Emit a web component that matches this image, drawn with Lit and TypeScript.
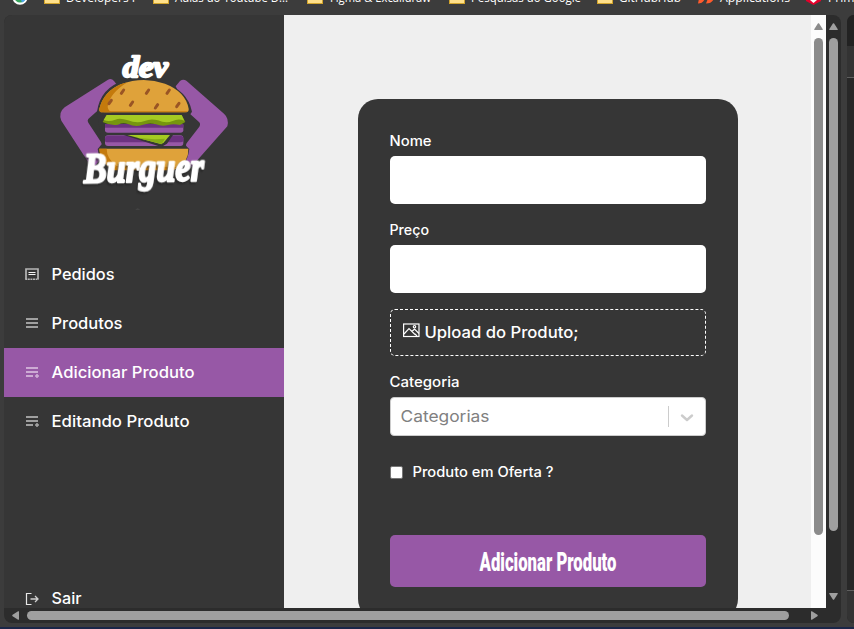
import { LitElement, html, svg, css } from "lit";
import { customElement, property } from "lit/decorators.js";

/** A single line of text fitted to a given width. */
@customElement("fit-text")
class FitText extends LitElement {
  @property() text = "";
  @property({ type: Number }) w = 100;
  @property({ type: Number }) h = 20;
  @property({ type: Number }) base = 15;
  static styles = css`
    :host { display: block; flex: none; }
    svg { display: block; overflow: visible; }
    text { fill: currentColor; font: inherit; }
  `;
  render() {
    return html`<svg width=${this.w} height=${this.h}>
      <text x="-0.5" y=${this.base} textLength=${this.w} lengthAdjust="spacingAndGlyphs">${this.text}</text>
    </svg>`;
  }
}

@customElement("bookmark-bar")
class BookmarkBar extends LitElement {
  static styles = css`
    :host { display: block; height: 15px; overflow: hidden; }
    svg { display: block; }
    text { font: 12px "Open Sans", sans-serif; fill: #fff; }
  `;
  render() {
    const folders = [44, 153, 307, 449, 597];
    const items: [string, number, number][] = [
      ["Developers I", 66, 69], ["Aulas do Youtube D...", 175, 113],
      ["Figma & Excalidraw", 330, 101], ["Pesquisas do Google", 471, 110],
      ["GitHubHub", 619, 62], ["Applications", 720, 70], ["Prime Video", 828, 68],
    ];
    return html`<svg width="854" height="15">
      <circle cx="20" cy="-3" r="7.7" fill="#fff" />
      <circle cx="20" cy="-3" r="5.6" fill="#35a45c" />
      <path d="M20-3h6a6 6 0 0 1-4 5.500Z" fill="#4aa3e8" />
      ${folders.map((x) => svg`<rect x=${x + 0.5} y="-8" width="15" height="11.500" fill="#ffe08a" stroke="#d2a42c" />`)}
      <path d="M698 3.500q5 0 7-5h-6ZM706 3.500q6 0 8-5h-6Z" fill="#ff5a2c" />
      <path d="M806-2h15v3l-7.500 4-7.500-4Z" fill="#e4002b" /><path d="M810-2h7v2l-3.500 3-3.500-3Z" fill="#fff" />
      ${items.map(([t, x, w]) => svg`<text x=${x} y="2" textLength=${w} lengthAdjust="spacingAndGlyphs">${t}</text>`)}
    </svg>`;
  }
}

@customElement("burger-logo")
class BurgerLogo extends LitElement {
  static styles = css`
    :host { display: block; }
    svg { display: block; }
    text { font-family: "Liberation Serif", serif; font-style: italic; font-weight: 700; fill: #fff; stroke: #fff; stroke-width: 6; stroke-linejoin: round; }
    .name { filter: drop-shadow(-4px 5px 2px rgba(30, 30, 30, 0.6)); }
  `;
  render() {
    const seeds = [[218, 140], [293, 140], [355, 140], [181, 171], [245, 176], [320, 184], [384, 180]];
    return html`<svg width="190" height="170" viewBox="0 0 570 510">
      <g fill="#9758a6">
        <path d="M174 104q10-5 18 4l12 16-58 70-28 25q-8 6-3 14l57 87-36 41-20-8-82-126q-10-24 10-40Z" />
        <path d="M390 108q10-8 20 0l112 98q16 14 10 38L424 366l-34-46 58-75q5-8-1-14l-30-27-40-80Z" />
      </g>
      <path d="M141 200q10-72 80-93 62-15 118 5 74 24 87 88l-8 12-10 90 10 10q-8 62-58 66H200q-50-10-57-66l12-14Z" fill="#363636" />
      <path d="M148 191q14-52 64-73 67-25 133-2 62 24 71 75 2 11-12 11H158q-12 0-10-11Z" fill="#dfa23a" />
      <path d="M148 191q14-52 64-73l20-6q-54 34-59 73 0 10 12 17h-27q-12 0-10-11Z" fill="#c47a0c" />
      <path d="M173 199h241q-3 3-10 3H160Z" fill="#c47a0c" />
      ${seeds.map(([x, y]) => svg`<path d=${`M${x - 4} ${y + 5}l7-10`} stroke="#9a5524" stroke-width="9" stroke-linecap="round" />`)}
      <path d="M165 239h235v17q0 7-9 7H174q-9 0-9-7Z" fill="#9758a6" />
      <path d="M165 237h235v11H165Z" fill="#6c3280" />
      <path d="M170 210h225l11 21-16 9q-20-4-36 0-18 5-36-2-20-6-42 2-20 7-42-3-15-5-30 2-22 4-46-8Z" fill="#76950f" />
      <path d="M170 210h225l8 17q-18-8-35 1-20 8-44-2-22-6-40 2-24 8-50-2-24-8-38-2-20 8-35 1Z" fill="#a5cb22" />
      <path d="M174 271h217q9 0 9 9v14q0 9-9 9H174q-9 0-9-9v-14q0-9 9-9Z" fill="#9758a6" />
      <path d="M174 272h217q9 0 9 9v8q-3 3-9 3H174q-9 0-9-5v-6q0-9 9-9Z" fill="#6c3280" />
      <path d="m221 270 113 36 17-10 18-26Z" fill="#363636" />
      <path d="m232 270 102 28 8-6 18-22Z" fill="#a5cb22" /><path d="m264 279 71 18 10-16-30 2Z" fill="#86ac18" />
      <path d="M148 311h267q2 38-35 61H190q-40-22-42-61Z" fill="#dfa23a" />
      <path d="M148 311h22q0 30 30 52l180 3-8 10H190q-42-26-42-65Z" fill="#c47a0c" />
      <g transform="translate(0 96) scale(1 1.13)"><text x="218" y="0" font-size="80" textLength="136" lengthAdjust="spacingAndGlyphs">dev</text></g>
      <g class="name" transform="translate(0 410) rotate(-1 280 0) scale(1 1.2)"><text x="102" y="0" font-size="105" textLength="360" lengthAdjust="spacingAndGlyphs">Burguer</text></g>
      <path d="M255 493q8-4 16 0Z" fill="#686868" />
    </svg>`;
  }
}

const bars = svg`<path d="M1 19h12v2H1ZM1 23h12v2H1Z" fill="currentColor" />`;
const icons: Record<string, unknown> = {
  receipt: svg`<path d="M1 29V19h12v10" fill="none" stroke="#b5b5b5" stroke-width="1.700" />
    <path d="M.2 29.300h13.600" stroke="#b5b5b5" stroke-width="1.500" stroke-dasharray="2 .6" />
    <path d="M3.500 22.500h7M3.500 24.500h7" stroke="#f4f4f4" />`,
  menu: svg`${bars}<path d="M1 27h12v2H1Z" fill="currentColor" />`,
  add: svg`${bars}<path d="M1 27h7v2H1Z" fill="currentColor" /><path d="M12 26l2 2-2 2-2-2Z" fill="currentColor" stroke="currentColor" stroke-width=".6" />`,
  exit: svg`<path d="M6.500 19.500h-5v11h5" fill="none" stroke="#e6e6e6" stroke-width="1.200" /><path d="M5.500 25H13M10 22l3 3-3 3" fill="none" stroke="#d0d0d0" stroke-width="1.300" />`,
};

@customElement("side-nav")
class SideNav extends LitElement {
  static styles = css`
    :host { display: flex; flex-direction: column; width: 280px; background: #363636; color: #fff; overflow: hidden; font: 500 16px Inter, sans-serif; }
    burger-logo { padding: 30px 0 35px 46px; }
    .row { display: flex; flex: none; height: 49px; gap: 13px; padding-left: 21px; }
    .row svg { width: 14px; height: 49px; color: #a0a0a0; }
    .active { background: #9758a6; }
    .active svg { color: #cdaad4; }
    .last { margin-top: 128px; }
  `;
  render() {
    const rows: [string, string, number, string][] = [
      ["receipt", "Pedidos", 63, ""], ["menu", "Produtos", 71, ""],
      ["add", "Adicionar Produto", 143, "active"], ["add", "Editando Produto", 138, ""],
      ["exit", "Sair", 30, "last"],
    ];
    return html`<burger-logo></burger-logo>
      ${rows.map(([icon, label, w, cls]) => html`<div class="row ${cls}">
        <svg>${icons[icon]}</svg><fit-text .text=${label} .w=${w} .h=${49} .base=${30}></fit-text>
      </div>`)}`;
  }
}

@customElement("product-form")
class ProductForm extends LitElement {
  static styles = css`
    :host { display: flex; flex-direction: column; box-sizing: border-box; width: 380px; height: 520px; padding: 32px; border-radius: 20px; background: #363636; color: #fff; font: 500 14px Inter, sans-serif; }
    .field { height: 48px; border-radius: 5px; background: #fff; margin-bottom: 16px; }
    .upload { box-sizing: border-box; height: 47px; margin-bottom: 16px; border: 1px dashed #fff; border-radius: 5px; display: flex; gap: 5px; padding-left: 12px; font-size: 16px; }
    .upload svg { width: 17px; height: 45px; }
    .select { box-sizing: border-box; height: 39px; border: 1px solid #ccc; border-radius: 4px; background: #fff; color: #808080; display: flex; align-items: center; padding-left: 10px; font-size: 16px; font-weight: 400; }
    .divider { width: 1px; height: 21px; margin-left: auto; background: #ccc; }
    .select svg { width: 36px; height: 37px; }
    .check { display: flex; gap: 10px; margin-top: 27px; height: 20px; }
    .box { box-sizing: border-box; width: 13px; height: 13px; margin-top: 3px; border: 1px solid #767676; border-radius: 2px; background: #fff; }
    .button { height: 52px; margin-top: 52px; border-radius: 5px; background: #9758a6; display: flex; justify-content: center; font: 900 25px "Roboto", sans-serif; }
    .button fit-text { -webkit-text-stroke: 0.4px #fff; }
  `;
  render() {
    return html`
      <fit-text .text=${"Nome"} .w=${42} .h=${25} .base=${15}></fit-text>
      <div class="field"></div>
      <fit-text .text=${"Preço"} .w=${39.5} .h=${25} .base=${15}></fit-text>
      <div class="field"></div>
      <div class="upload">
        <svg fill="none" stroke="#fff" stroke-width="1.200"><rect x=".6" y="14" width="15.400" height="12.500" /><path d="m1 24 5-5.500 6 6M9 21.500l2.500-2.500 4.500 4.500M14 26l-2-2" /><circle cx="11.500" cy="16.700" r="1.200" /></svg>
        <fit-text .text=${"Upload do Produto;"} .w=${154} .h=${45} .base=${28}></fit-text>
      </div>
      <fit-text .text=${"Categoria"} .w=${70} .h=${25} .base=${15}></fit-text>
      <div class="select">
        <fit-text .text=${"Categorias"} .w=${89} .h=${37} .base=${24}></fit-text>
        <span class="divider"></span>
        <svg><path d="m13 17.500 5 4.500 5-4.500" fill="none" stroke="#ccc" stroke-width="2.400" stroke-linecap="round" stroke-linejoin="round" /></svg>
      </div>
      <div class="check"><span class="box"></span><fit-text .text=${"Produto em Oferta ?"} .w=${141} .h=${20} .base=${14}></fit-text></div>
      <div class="button"><fit-text .text=${"Adicionar Produto"} .w=${137} .h=${52} .base=${35.5}></fit-text></div>`;
  }
}

@customElement("app-root")
class AppRoot extends LitElement {
  static styles = css`
    :host { display: block; width: 854px; height: 629px; overflow: hidden; background: #3c3c3c; }
    .middle { display: flex; height: 612px; padding-left: 4px; gap: 6px; }
    .window { width: 837px; height: 608px; border-radius: 8px; overflow: hidden; background: #2c2c2c; }
    .view { display: flex; height: 593px; }
    .content { width: 527px; background: #efefef; box-sizing: border-box; padding: 84px 0 0 74px; overflow: hidden; }
    .vbar { width: 15px; display: flex; flex-direction: column; align-items: center; color: #9f9f9f; }
    .vbar.light { background: #fcfcfc; color: #8b8b8b; }
    .vbar svg { width: 9px; height: 7px; margin-top: 8px; fill: currentColor; flex: none; }
    .thumb { width: 9px; height: 493px; margin-top: 8px; border-radius: 5px; background: currentColor; flex: none; }
    .light .thumb { height: 497px; }
    .vbar svg.down { margin-top: 62px; }
    .hbar { display: flex; align-items: center; height: 15px; padding-left: 8px; gap: 8px; }
    .hbar svg { width: 7px; height: 9px; fill: #9f9f9f; }
    .hthumb { width: 762px; height: 9px; border-radius: 5px; background: #9f9f9f; }
    .right { margin-left: 14px; }
    .side { flex: 1; height: 608px; border-radius: 8px 0 0 8px; overflow: hidden; background: #282828; display: flex; flex-direction: column; }
    .tab { height: 31px; background: #222; }
    .tools { height: 31px; background: #333; border-bottom: 1px solid #5f5f5f; }
    .foot { height: 32px; margin-top: auto; background: #333; border-top: 1px solid #5f5f5f; }
    .taskbar { height: 2px; background: #1b2648; }
  `;
  render() {
    const up = html`<svg><path d="M4.500 1 8 6.500H1Z" stroke="currentColor" stroke-width="1.500" stroke-linejoin="round" /></svg>`;
    return html`
      <bookmark-bar></bookmark-bar>
      <div class="middle">
        <div class="window">
          <div class="view">
            <side-nav></side-nav>
            <div class="content"><product-form></product-form></div>
            <div class="vbar light">${up}<div class="thumb"></div></div>
            <div class="vbar">${up}<div class="thumb"></div>
              <svg class="down"><path d="M4.500 6 8 .5H1Z" stroke="currentColor" stroke-width="1.500" stroke-linejoin="round" /></svg></div>
          </div>
          <div class="hbar">
            <svg><path d="M1 4.500 6.500 1v7Z" stroke="#9f9f9f" stroke-width="1.500" stroke-linejoin="round" /></svg>
            <div class="hthumb"></div>
            <svg class="right"><path d="M6 4.500.5 1v7Z" stroke="#9f9f9f" stroke-width="1.500" stroke-linejoin="round" /></svg>
          </div>
        </div>
        <div class="side"><div class="tab"></div><div class="tools"></div><div class="foot"></div></div>
      </div>
      <div class="taskbar"></div>`;
  }
}
